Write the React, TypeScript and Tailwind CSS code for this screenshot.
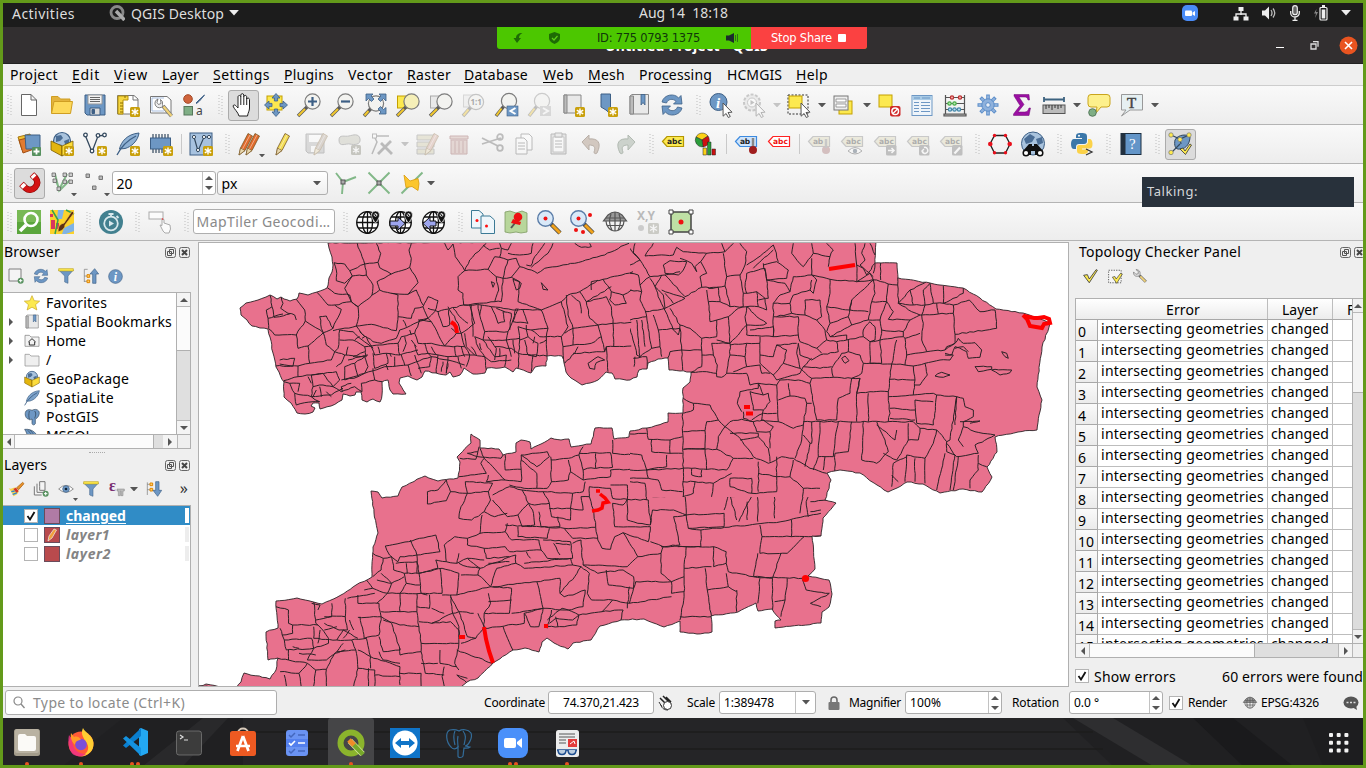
import React, { useLayoutEffect, useRef, useState } from "react";

/* Text set to a known advance width through letter spacing. */
function Fit({ w, className = "", children }: { w: number; className?: string; children: React.ReactNode }) {
  const ref = useRef<HTMLSpanElement>(null);
  const [ls, setLs] = useState(0);
  useLayoutEffect(() => {
    const el = ref.current;
    if (!el) return;
    const n = (el.textContent || "").length || 1;
    setLs((w - el.getBoundingClientRect().width) / n);
  }, [w]);
  return (
    <span className={"inline-block shrink-0 whitespace-pre " + className} style={{ width: w }}>
      <span ref={ref} className="inline-block" style={{ letterSpacing: ls }}>
        {children}
      </span>
    </span>
  );
}

const S = "#5b5b5b";
const B = "#6d97c4";
const DB = "#3d5f85";
const star = (
  <g>
    <rect x="14" y="14" width="10" height="10" rx="1.5" fill="#c9a00c" stroke="none" />
    <path d="M19 15.5v7M15.8 17.2l6.4 3.6M22.2 17.2l-6.4 3.6" stroke="#fff" strokeWidth="1.4" />
  </g>
);
const lens = (x: number, y: number, fill = "#f3f3f0") => (
  <g>
    <path d={`M${x - 5} ${y + 5}L1 23`} stroke={S} strokeWidth="3.4" />
    <path d={`M${x - 7.5} ${y + 7.5}L1.5 22.5`} stroke="#f2c82e" strokeWidth="2" />
    <circle cx={x} cy={y} r="7.6" fill={fill} stroke="#7c7c7c" strokeWidth="1.2" />
  </g>
);
const label = (fill: string, edge: string, text: string, tc: string) => (
  <g>
    <path d="M1.5 9.5L6 4.5H22.5V14.5H6Z" fill={fill} stroke={edge} strokeWidth="1.2" />
    <text x="6" y="12.3" fontSize="7.5" fontWeight="700" fill={tc} fontFamily="DejaVu Sans, sans-serif" textLength={text.length > 2 ? 15 : 10}>{text}</text>
  </g>
);
const cursor = <path d="M14 10l9 9.2-4 .3 2.3 4-2 1-2.2-4-3 2.7z" fill="#fff" stroke="#555" strokeWidth="1" />;
const pencil = (x: number, c: string) => (
  <g>
    <path d={`M${x} 23l1.5-7L${x + 9} 1.5l4.500 2.500L${x + 6} 18.5z`} fill={c} stroke="#7a5a2a" strokeWidth="0.8" />
    <path d={`M${x} 23l1.5-7 4.500 2.500z`} fill="#e9d9b0" stroke="#7a5a2a" strokeWidth="0.7" />
    <path d={`M${x + 3.5} 17L${x + 11} 3`} stroke="#ffffff" strokeOpacity=".45" strokeWidth="1" />
  </g>
);
const globe = (
  <g fill="none" stroke="#111" strokeWidth="1.3">
    <circle cx="11.5" cy="12.5" r="10.8" fill="#fff" />
    <ellipse cx="11.5" cy="12.5" rx="5" ry="10.8" />
    <path d="M11.5 1.7v21.6M.7 12.500h21.6M2.500 7h18M2.500 18h18" />
  </g>
);
const pin = <path d="M19.5 1a4 4 0 0 1 4 4c0 3-4 8-4 8s-4-5-4-8a4 4 0 0 1 4-4zM19.500 3.500a1.500 1.500 0 1 0 .01 0z" fillRule="evenodd" fill="#111" stroke="#fff" strokeWidth="0.6" />;
const globeBlue = (
  <g>
    <circle cx="12" cy="9" r="8.5" fill="#a9c3dd" stroke={DB} strokeWidth="1.2" />
    <path d="M6 4l5-1 2 3-3 3-4 1zM14 9l5-2v5l-3 3zM8 12l4 1-1 4z" fill="#4a6d95" />
  </g>
);

const ICONS: Record<string, React.ReactNode> = {
  newdoc: <path d="M4.500 1.500H14L19.500 7V22.500H4.500ZM14 1.500V7H19.500" fill="#fff" stroke="#666" />,
  open: <g stroke="#cf9e22"><path d="M1.500 20V3.500H8L10.500 6H20V20Z" fill="#e3b33d" /><path d="M1.500 20.500L4 8.500H22.500L20.500 20.500Z" fill="#fdd95a" /></g>,
  save: <g stroke={DB}><path d="M2 2H22V22H4L2 20Z" fill={B} /><path d="M5 2H19V11H5Z" fill="#f2f2f2" stroke="#999" /><path d="M7 4.500H17M7 6.500H17M7 8.500H17" stroke="#666" strokeWidth="1" /><path d="M7 15H17V22H7Z" fill="#ddd" /><path d="M9 16.500h2.500v4H9z" fill={DB} /></g>,
  layout: <g><path d="M1.500 2.500H18L22 6V21H1.500Z" fill="#fff" stroke="#777" /><path d="M2 3H12V7H7V21H2Z" fill="#f5d642" stroke="#b8930a" /><path d="M4 10h3M4 13h3M4 16h3M4 19h3M9 3v2" stroke="#8a6d00" /><path d="M17 3v4h5" fill="none" stroke="#777" />{star}</g>,
  report: <g><path d="M1.500 3.500H18L22 7V20H1.500Z" fill="#fff" stroke="#777" /><path d="M3 5h12M3 5v13h12" fill="none" stroke="#a9bfe0" /><path d="M14 13l8.500 10" stroke="#777" strokeWidth="3.800" /><path d="M14.500 13.500l8 9.500" stroke="#f0d278" strokeWidth="2.400" /><path d="M9 6a4.500 4.500 0 1 0 5 7l-.5-1.500a4.500 4.500 0 0 0-2-5l.5 4-2.500 1-1.500-2z" fill="#eee" stroke="#666" strokeWidth=".8" /></g>,
  style: <g><circle cx="6" cy="6" r="4.300" fill="#d0643c" stroke="#a34a28" /><path d="M14 10l3-3 5.500-5-5 6-3 2.500z" fill={B} stroke={DB} /><rect x="2" y="13.500" width="8.500" height="8.500" fill="#7fae85" stroke="#55775a" /><text x="14" y="22" fontSize="12" fill="#444" fontFamily="Noto Sans, sans-serif">a</text></g>,
  hand: <path d="M8 23c-1-4-5-7-6-10 .5-1.500 2-1.500 3.500.5L7 15V4c0-2 2.500-2 2.800 0V2c.3-1.800 2.700-1.800 3 0v1.500c.4-1.600 2.600-1.500 2.900.2V6c.5-1.400 2.600-1.200 2.800.4V15c0 3-1.500 4.500-2 8z M9.800 4v8M12.800 3v9M15.700 5v7" fill="#fff" stroke="#222" strokeWidth="1" />,
  pansel: <g><rect x="3" y="3" width="15" height="14" fill="#fce94f" stroke="#c4a000" /><path d="M12 .5l4 4.500h-2.400v3h-3.200v-3H8zM23.500 12l-4.500 4v-2.400h-3v-3.200h3V8zM12 23.500l-4-4.500h2.400v-3h3.200v3H16zM.5 12L5 8v2.400h3v3.200H5V16z" fill={B} stroke={DB} strokeWidth=".8" /></g>,
  zin: <g>{lens(15.500, 8.500)}<path d="M15.500 4v9M11 8.500h9" stroke={DB} strokeWidth="2.200" /></g>,
  zout: <g>{lens(15.500, 8.500)}<path d="M11 8.500h9" stroke={DB} strokeWidth="2.200" /></g>,
  zfull: <g>{lens(13, 10.500)}<path d="M3 1h7L8 3l3 3-2.500 2.500-3-3L3 8zM23 1h-7l2 2-3 3 2.500 2.500 3-3L23 8zM23 21h-7l2-2-3-3 2.500-2.500 3 3 2.500-2z" fill={B} stroke={DB} strokeWidth=".8" /></g>,
  zsel: <g><rect x="1.500" y="3" width="14" height="12" fill="#fce94f" stroke="#c4a000" />{lens(15.500, 8.500, "#f5efb8")}</g>,
  zlay: <g><rect x="1.500" y="3" width="14" height="12" fill="#e9e9e9" stroke="#aaa" />{lens(15.500, 8.500)}</g>,
  znat: <g opacity=".4"><rect x="1.500" y="2" width="14" height="12" fill="#e9e9e9" stroke="#aaa" />{lens(14, 9)}<text x="8.500" y="12" fontSize="8" fontWeight="700" fill="#333">1:1</text></g>,
  zprev: <g>{lens(14, 8)}<rect x="12" y="13" width="11" height="10" fill={B} stroke={DB} strokeWidth=".6" /><path d="M20.500 15l-5 3 5 3" fill="none" stroke="#fff" strokeWidth="2" /></g>,
  znext: <g opacity=".35">{lens(14, 8)}<rect x="12" y="13" width="11" height="10" fill="#aaa" /><path d="M15 15l5 3-5 3" fill="none" stroke="#fff" strokeWidth="2" /></g>,
  newmap: <g><path d="M3 2H20V20H3Z" fill="#e8e8e8" stroke="#888" /><path d="M3 2H6V20H3Z" fill="#bbb" stroke="#888" />{star}</g>,
  newbm: <g><path d="M7 1h9.500v20l-4.500-4-5-3z" fill={B} stroke={DB} />{star}</g>,
  bms: <g><path d="M3 3L5 1.500H21.500V21H3Z" fill="#e9e9e9" stroke="#888" /><path d="M3 3H6.500V21H3Z" fill="#bbb" stroke="#888" /><path d="M14 1.500h4V12l-2-2.500-2 2.500z" fill={B} stroke={DB} strokeWidth=".8" /></g>,
  refresh: <g fill={B} stroke={DB} strokeWidth=".8"><path d="M2 9C4 1 15 0 18.500 5L21 2.500 22 11H13.500l2.500-2.500C13 5 8 6 6.500 10z" /><path d="M22 15C20 23 9 24 5.500 19L3 21.500 2 13h8.500L8 15.500c3 3.500 8 2.500 9.500-1.500z" /></g>,
  info: <g><circle cx="9.500" cy="9" r="8.500" fill={B} stroke={DB} /><text x="7" y="14.500" fontSize="15" fontStyle="italic" fontWeight="700" fill="#fff" fontFamily="Liberation Serif, serif">i</text>{cursor}</g>,
  act: <g opacity=".4"><circle cx="10" cy="9.500" r="8" fill="#ddd" stroke="#888" strokeWidth="2" strokeDasharray="3 1.500" /><circle cx="10" cy="9.500" r="4.500" fill="#fff" stroke="#888" /><path d="M8.500 7l4 2.500-4 2.500z" fill="#777" />{cursor}</g>,
  select: <g><rect x="1" y="2" width="20" height="19" fill="none" stroke="#333" strokeDasharray="2 1.500" /><rect x="2" y="3" width="13" height="12" fill="#fce94f" stroke="#c4a000" />{cursor}</g>,
  selval: <g><rect x="7" y="8" width="13" height="13" fill="#fce94f" stroke="#c4a000" /><rect x="2" y="3" width="14" height="14" fill="#eee" stroke="#777" /><path d="M4 6h10v3H4zM4 11h10v3H4z" fill="#fff" stroke="#888" strokeWidth=".8" /></g>,
  desel: <g><rect x="2" y="2" width="13" height="12" fill="#fce94f" stroke="#c4a000" /><rect x="13" y="13" width="10.500" height="10.500" rx="2" fill="#cf2a2a" /><circle cx="18.200" cy="18.200" r="3.300" fill="none" stroke="#fff" strokeWidth="1.500" /><path d="M16 20.500l4.500-4.500" stroke="#fff" strokeWidth="1.500" /></g>,
  table: <g><rect x="2" y="2.500" width="20" height="20" fill="#eef4fa" stroke={B} /><path d="M2.500 3H22V7H2.500z" fill="#a9cbe6" /><path d="M4 5h6M12 5h8M4 9.500h5M11 9.500h9M4 12.500h5M11 12.500h9M4 15.500h5M11 15.500h9M4 18.500h5M11 18.500h9" stroke={B} strokeWidth="1.200" /></g>,
  abacus: <g fill="none" stroke="#555" strokeWidth="1.200"><path d="M2.500 2v19M21.500 2v19M2.500 4.500h19M2.500 10.500h19M2.500 16.500h19" /><path d="M1 21h22v2H1z" fill="#aaa" /><circle cx="9" cy="4.500" r="1.700" fill="#f3a6a6" stroke="#b33" /><circle cx="17" cy="4.500" r="1.700" fill="#f3a6a6" stroke="#b33" /><circle cx="6.500" cy="10.500" r="1.700" fill="#b6eab0" stroke="#4a4" /><circle cx="11.500" cy="10.500" r="1.700" fill="#b6eab0" stroke="#4a4" /><circle cx="7" cy="16.500" r="1.700" fill="#b5d9ee" stroke="#48a" /><circle cx="11.500" cy="16.500" r="1.700" fill="#b5d9ee" stroke="#48a" /><circle cx="16" cy="16.500" r="1.700" fill="#b5d9ee" stroke="#48a" /></g>,
  gear: <g stroke="#5b8dc9"><path d="M12 1.500v21M1.500 12h21M4.600 4.600l14.800 14.800M19.400 4.600L4.600 19.400" strokeWidth="3.600" /><path d="M12 2.500v19M2.500 12h19M5.300 5.300l13.400 13.400M18.700 5.300L5.300 18.700" stroke="#8eb1dc" strokeWidth="2" /><circle cx="12" cy="12" r="6.200" fill="#8eb1dc" /><circle cx="12" cy="12" r="2.300" fill="#e9eff7" /></g>,
  sigma: <path d="M5 1.500H20L20.500 7H19C18.500 4.500 17 4 15 4H10L15 11.500 9 19h6.500c2.500 0 3.500-1 4.500-4h1.500L20 22.500H4.500V21L11 12.500 5 3z" fill="#9b0fa3" stroke="#6d0873" strokeWidth=".5" />,
  ruler: <g><path d="M2 6.500h20M2 4v5M22 4v5" stroke="#3d6380" strokeWidth="1.800" /><rect x="1" y="12" width="22" height="8.500" fill="#bbb" stroke="#555" /><path d="M4 12v4M7 12v3M10 12v5M13 12v3M16 12v4M19 12v3" stroke="#333" /></g>,
  maptip: <g><path d="M4 1.500H20a3 3 0 0 1 3 3V11a3 3 0 0 1-3 3H14L9 20 10 14H4a3 3 0 0 1-3-3V4.500a3 3 0 0 1 3-3z" fill="#fdf08c" stroke="#c9a41c" /><circle cx="5.500" cy="19.500" r="3.800" fill="#7fae85" stroke="#557a5c" /></g>,
  textann: <g><path d="M1.500 1.500H22.500V17H10L1.500 23 6 17H1.500Z" fill="#e6f0f2" stroke="#999" /><text x="7" y="14.500" fontSize="15" fontFamily="Liberation Serif, serif" fill="#444" stroke="#444" strokeWidth=".5">T</text></g>,

  addlayer: <g><path d="M1 5l12-3 3 12-11 4z" fill="#f1c232" stroke="#a8770f" /><path d="M2 8l12-3 3 12-11 4z" fill="#e07b32" stroke="#a14e14" /><path d="M8 3h15v14H9z" fill={B} stroke={DB} /><rect x="15" y="15" width="9" height="9" rx="1" fill="#57915f" /><path d="M19.500 16.500v6M16.500 19.500h6" stroke="#fff" strokeWidth="1.800" /></g>,
  gpkg: <g>{globeBlue}<path d="M1 9l11 5v10L1 18z" fill="#e3b50e" stroke="#7a5c00" strokeWidth=".8" /><path d="M23 9l-11 5v10l11-6z" fill="#fcdc3c" stroke="#7a5c00" strokeWidth=".8" />{star}</g>,
  newgpkg: <g>{globeBlue}<path d="M1 9l11 5v10L1 18z" fill="#e3b50e" stroke="#7a5c00" strokeWidth=".8" /><path d="M23 9l-11 5v10l11-6z" fill="#fcdc3c" stroke="#7a5c00" strokeWidth=".8" /></g>,
  shp: <g fill="none" stroke="#34495e" strokeWidth="1.300"><path d="M2.500 4L9 20 15 4 22 3" /><g fill="#fff"><circle cx="2.500" cy="3" r="1.800" /><circle cx="9" cy="19" r="1.800" /><circle cx="15" cy="3.500" r="1.800" /><circle cx="21.500" cy="3" r="1.800" /></g>{star}</g>,
  feather: <g><path d="M3.500 17C5 10 11 2 23 1c-1 8-8 14-14 15.500z" fill="#7da3cb" stroke={DB} strokeWidth="1" /><path d="M1 23C5 15 12 8 20 4" fill="none" stroke={DB} strokeWidth="1.300" /></g>,
  feathern: <g><path d="M3.500 17C5 10 11 2 23 1c-1 8-8 14-14 15.500z" fill="#8fb1d4" stroke={DB} strokeWidth="1" /><path d="M1 23C5 15 12 8 20 4" fill="none" stroke={DB} strokeWidth="1.300" />{star}</g>,
  chip: <g><path d="M4 2v19M7 2v19M10 2v19M13 2v19M16 2v19M19 2v19" stroke="#34495e" strokeWidth="1.200" /><rect x="1.500" y="6" width="20" height="11" fill={B} stroke={DB} />{star}</g>,
  virt: <g><rect x="1" y="1" width="22" height="22" fill="#a7c2df" stroke={DB} /><path d="M5 5l4 14 6-14 5 0" fill="none" stroke="#34495e" strokeWidth="1.200" /><g fill="#fff" stroke="#34495e"><circle cx="5" cy="5" r="1.600" /><circle cx="9" cy="18" r="1.600" /><circle cx="15" cy="5" r="1.600" /><circle cx="20" cy="5" r="1.600" /></g>{star}</g>,
  edits: <g>{pencil(1, "#e06a2c")}{pencil(8, "#e06a2c")}</g>,
  edit: pencil(5, "#f3dc55"),
  saved: <g opacity=".35"><path d="M2 2H20V21H4L2 19Z" fill="#aaa" stroke="#666" /><path d="M5 3H17V10H5ZM7 14H15V20H7Z" fill="#fff" />{pencil(10, "#a98")}</g>,
  addpoly: <g opacity=".35"><path d="M2 8C2 2 8 5 12 4s10-3 11 3-6 6-10 5-11 4-11-4z" fill="#bba" stroke="#666" /><rect x="14" y="13" width="10" height="10" rx="1.500" fill="#776" /><path d="M19 14.500v7M16 16.500l6 3.500M22 16.500l-6 3.500" stroke="#fff" strokeWidth="1.300" /></g>,
  vertex: <g opacity=".35"><path d="M4 4h15M4 4l3 6-5 12" fill="none" stroke="#555" strokeWidth="1.500" /><rect x="2.500" y="2" width="4" height="4" fill="#fff" stroke="#555" /><path d="M8 22L21 9M11 11l11 11" stroke="#555" strokeWidth="2.800" /></g>,
  attr: <g opacity=".35"><path d="M2 3H19V8H2ZM2 10H19V15H2ZM2 17H19V22H2Z" fill="#cdc7a0" stroke="#777" />{pencil(10, "#c98")}</g>,
  trash: <g opacity=".35"><path d="M2 4h18v3H2zM3 8h16v14H3z" fill="#c9a39a" stroke="#844" /><path d="M7 9v12M11 9v12M15 9v12" stroke="#844" /></g>,
  cut: <g opacity=".35" fill="none" stroke="#555" strokeWidth="1.800"><path d="M1 6l16 8M1 12L20 6" /><circle cx="19" cy="5" r="2.800" /><circle cx="19" cy="16" r="2.800" /></g>,
  copy: <g opacity=".4" fill="#fff" stroke="#666"><path d="M7 2H15L18 5V18H7Z" /><path d="M2 6H10L13 9V22H2Z" /><path d="M4 11h7M4 14h7M4 17h7" /></g>,
  paste: <g opacity=".4"><path d="M4 2H19V22H4Z" fill="#ccc" stroke="#666" /><path d="M6 5H17V20H6Z" fill="#fff" stroke="#888" /><path d="M8 1h7v4H8zM8 9h7M8 12h7M8 15h7" fill="#ddd" stroke="#666" /></g>,
  undo: <path d="M9 3v4c9-1 13 4 8 14-1 1-3 1-3-1 2-5 0-7-5-7v5L2 10z" fill="#d2c8c0" stroke="#b9b0a8" />,
  redo: <path d="M15 3v4c-9-1-13 4-8 14 1 1 3 1 3-1-2-5 0-7 5-7v5l7-8z" fill="#ccd2cc" stroke="#b2bab2" />,
  abcY: label("#fce94f", "#b49600", "abc", "#222"),
  chart: <g stroke="#222" strokeWidth=".5"><path d="M8 8L2 5A7 7 0 0 1 14 4z" fill="#fcd116" /><path d="M8 8l6-4a7 7 0 0 1-5 11z" fill="#c11" /><path d="M8 8l1 7a7 7 0 0 1-7-10z" fill="#2a9d3a" /><path d="M9 16h3.500v7H9z" fill="#fcd116" /><path d="M13.500 10H17v13h-3.500z" fill="#2a9d3a" /><path d="M18 17h3.500v6H18z" fill="#c11" /></g>,
  abB: <g>{label("#cfe4fb", "#3c8adf", "ab", "#222")}<path d="M19 6v11" stroke="#888" strokeWidth="2.500" /><circle cx="19" cy="18" r="4" fill="#a01e1e" /></g>,
  abcR: label("#fff", "#f22", "abc", "#e11"),
  abP: <g opacity=".4">{label("#ddd9b8", "#888", "ab", "#444")}<circle cx="19" cy="18" r="4" fill="#a77" /><path d="M19 7v9" stroke="#888" strokeWidth="2.500" /></g>,
  abE: <g opacity=".4">{label("#ddd9b8", "#888", "abc", "#444")}<path d="M8 19q7-7 14 0q-7 6-14 0z" fill="#fff" stroke="#555" /><circle cx="15" cy="19" r="2.200" fill="#456" /></g>,
  abM: <g opacity=".4">{label("#ddd9b8", "#888", "abc", "#444")}<rect x="13" y="13" width="10.500" height="10.500" rx="1.500" fill="#777" /><path d="M15 18.500h6M18.500 16l2.500 2.500-2.500 2.500" stroke="#fff" strokeWidth="1.500" fill="none" /></g>,
  abR: <g opacity=".4">{label("#ddd9b8", "#888", "abc", "#444")}<rect x="13" y="13" width="10.500" height="10.500" rx="1.500" fill="#777" /><path d="M16 19.500a3 3 0 1 0 2-4M18 21l-2-2 2-2" stroke="#fff" strokeWidth="1.400" fill="none" /></g>,
  abC: <g opacity=".4">{label("#ddd9b8", "#888", "abc", "#444")}<rect x="13" y="13" width="10.500" height="10.500" rx="1.500" fill="#777" /><path d="M15.500 21.500l5.500-6" stroke="#fff" strokeWidth="2.200" /></g>,
  hex: <g><path d="M6.500 3.500H17.500L22 12 17.500 21H6.500L2 12Z" fill="none" stroke="#222" strokeWidth="1.300" /><g fill="#e8101c"><circle cx="2.300" cy="12" r="2.300" /><circle cx="21.700" cy="12" r="2.300" /><circle cx="6.500" cy="3.500" r="1.700" /><circle cx="17.500" cy="3.500" r="1.700" /><circle cx="6.500" cy="20.800" r="1.700" /><circle cx="17.500" cy="20.800" r="1.700" /></g></g>,
  binoc: <g><circle cx="12" cy="11.500" r="11.500" fill="#a9c3dd" stroke={DB} /><path d="M3 7l6-5 5 3-3 5-6 2zM15 7l6-2 1 6-5 2z" fill="#4a6d95" /><path d="M8 12h3v2h2v-2h3l6 7v4h-8v-4h-4v4H2v-4z" fill="#111" /><circle cx="5" cy="21" r="2.800" fill="#fff" stroke="#111" strokeWidth="1.500" /><circle cx="19" cy="21" r="2.800" fill="#fff" stroke="#111" strokeWidth="1.500" /></g>,
  python: <g><path d="M11 1c5 0 6 1 6 3.500V9c0 2-1 3-3 3H9c-2 0-3 1-3 3v2H4c-2 0-3-2-3-5s1-5 3-5h8V6H6V4.500C6 2 7 1 11 1z" fill="#3b77a9" /><path d="M13 22c-5 0-6-1-6-3.500V15c0-1.500 1-2 3-2h4c2.500 0 4-1.500 4-3.500V7h1.500c2 0 3 2 3 5s-1 4.500-3 4.500H12v1h6v1c0 2.500-1 3.500-5 3.500z" fill="#fbd249" /><circle cx="9" cy="3.800" r="1" fill="#fff" /><path d="M16 17l6 3-6 3" fill="none" stroke="#333" strokeWidth="1.300" /></g>,
  help: <g><rect x="2" y="1.500" width="20" height="21" fill="#6395c8" stroke="#1c2e40" /><rect x="2" y="1.500" width="4.500" height="21" fill="#22303f" /><text x="10" y="17" fontSize="15" fontFamily="Liberation Serif, serif" fill="#fff">?</text></g>,
  topo: <g><path d="M7 8C10 2 20 2 22 5c0 5-3 12-10 12-5 1-6-4-5-9z" fill={B} stroke="#34495e" /><path d="M3 3L12 7 21 3M12 7L13 12M3 21L12 12" fill="none" stroke="#34495e" strokeWidth="1.200" /><g fill="#fce94f" stroke="#777" strokeWidth=".7"><circle cx="3" cy="3" r="2.200" /><circle cx="12" cy="7.500" r="2.200" /><circle cx="21" cy="3" r="2.200" /><circle cx="3" cy="20.500" r="2.200" /></g><path d="M12 17l3-1 2 3 5-7 1.500 1-6 9.500z" fill="#fce94f" stroke="#333" strokeWidth=".8" /></g>,

  magnet: <g fill="none"><path d="M4.500 13l4 4c3 2.500 6.500 2.500 9.500-.5s3-6.500.5-9.500L15 3.500" stroke="#8a0808" strokeWidth="6.400" /><path d="M4.500 13l4 4c3 2.500 6.500 2.500 9.500-.5s3-6.500.5-9.500L15 3.500" stroke="#d31313" strokeWidth="5" /><path d="M5 13.500l2.500 2.500M15.500 4l2 2.200" stroke="#fff" strokeWidth="5" /></g>,
  snapv: <g fill="none" stroke="#82b888" strokeWidth="2"><path d="M5 3L9 19 17 3M5 8L10 19 20 9" /><g fill="#ccc" stroke="#666" strokeWidth=".8"><path d="M2 2h3.500v3.500H2zM3 8h3.500v3.500H3zM7 16h3.500v3.500H7zM13 2h3.500v3.500H13zM19 2h3.500v3.500H19zM13 9h3.500v3.500H13zM19 9h3.500v3.500H19z" /></g></g>,
  snapp: <g fill="#bbb" stroke="#777"><path d="M3 3h3.500v3.500H3zM16 5h3.500v3.500H16zM9.500 15h3.500v3.500H9.500z" /></g>,
  topoedit: <g stroke="#82b888" strokeWidth="1.900"><path d="M2 2l7 9 13-5M9 11l-1 12" fill="none" /><rect x="7" y="9" width="4" height="4" fill="#aaa" stroke="#555" strokeWidth="1" /></g>,
  inter: <g stroke="#82b888" strokeWidth="1.900"><path d="M1.500 1.500l21 21M22.500 1.500l-21 21" /><rect x="10" y="10" width="4" height="4" fill="#aaa" stroke="#555" strokeWidth="1" /></g>,
  trace: <g><path d="M22.500 1.500l-21 21" stroke="#82b888" strokeWidth="1.900" /><path d="M4 4l6 6 8-2.500 1 5-1 7-6-4-6 1z" fill="#fcc62d" stroke="#d99b0a" strokeWidth=".8" /></g>,

  maptiler: <g><rect width="24" height="24" fill="#5aa53c" /><rect width="24" height="12" fill="#8cc665" opacity=".6" /><path d="M3 21l6-6" stroke="#fff" strokeWidth="3.500" /><circle cx="14" cy="9.500" r="6.500" fill="none" stroke="#fff" strokeWidth="2.600" /></g>,
  osm: <g><rect width="24" height="24" fill="#fcd22a" /><path d="M0 4h3v3H0zM1 10h4v9H1zM6 13h3v6H6z" fill="#d8365e" /><path d="M8 0h6l-2 9H7zM14 18l10-5v8l-8 3h-4z" fill="#7fb3e6" /><path d="M2 0l6 10-3 14M16 0l8 4" fill="none" stroke="#36a24a" strokeWidth="1.500" /><path d="M8 22c0-7 3-8 6-9l8-12 2 2-9 12c0 4-4 6-7 7z" fill="#5e3014" stroke="#f4c842" strokeWidth=".8" /></g>,
  clock: <g><circle cx="12" cy="12" r="12" fill="#42808f" /><circle cx="12" cy="13.500" r="6.800" fill="none" stroke="#d8e8ec" strokeWidth="1.800" /><path d="M9.500 4h5M12 4v3M17.500 6l2 2" stroke="#d8e8ec" strokeWidth="1.800" /><path d="M10 10.500l5 3-5 3z" fill="#d8e8ec" /></g>,
  rectsel: <g fill="#fbfbfb" stroke="#aaa"><rect x="1" y="2" width="14" height="7" /><path d="M14 9.500v6l-2-.5 3 6 2 2h4l1.500-4-.5-4-6-2V9.500z" /><circle cx="14.500" cy="9" r=".8" fill="#e33" stroke="none" /></g>,
  globe: <g>{globe}{pin}</g>,
  globeR: <g>{globe}<path d="M1 11h8V7l7 6.500L9 20v-4H1z" fill="#9da5ee" stroke="#111" />{pin}</g>,
  globeL: <g>{globe}<path d="M14 11H8V7L1 13.500 8 20v-4h6z" fill="#9da5ee" stroke="#111" />{pin}</g>,
  docs: <g fill="#eef6fb" stroke="#3b7a96"><path d="M.5 .5H8L12 4V18H.5Z" /><path d="M10 6H19L23.500 10V23.500H10Z" /><circle cx="6" cy="10.500" r="1.500" fill="#f11" stroke="none" /><circle cx="15.500" cy="16" r="1.500" fill="#f11" stroke="none" /></g>,
  pinmap: <g><path d="M1 2l5-1 6 2 6-2 5 2v19l-6 1-5-1-6 1-5-1z" fill="#b8d69b" stroke="#7d9a62" strokeWidth=".8" /><path d="M7 18l4-5" stroke="#555" strokeWidth="2" /><circle cx="14" cy="7" r="4.300" fill="#ee1111" /><path d="M9 9l8 3-1 3-9-2z" fill="#ee1111" /></g>,
  zpoint: <g><path d="M14 14l9 9" stroke="#444" strokeWidth="4.500" /><path d="M15 15l8 8" stroke="#f0a21c" strokeWidth="3" /><circle cx="8.500" cy="8.500" r="7.800" fill="#d9e9f8" stroke="#5b7da8" strokeWidth="1.400" /><circle cx="8.500" cy="8.500" r="2" fill="#e11" /></g>,
  zpoints: <g><path d="M14 14l9 9" stroke="#444" strokeWidth="4.500" /><path d="M15 15l8 8" stroke="#f0a21c" strokeWidth="3" /><circle cx="8.500" cy="8.500" r="7.800" fill="#d9e9f8" stroke="#5b7da8" strokeWidth="1.400" /><g fill="#e11"><circle cx="8.500" cy="8.500" r="2" /><circle cx="20" cy="5" r="2" /><circle cx="6" cy="20" r="2" /><circle cx="13" cy="22" r="2" /></g></g>,
  globeG: <g fill="none" stroke="#555" strokeWidth="1.200"><path d="M5 5q7-6 14 0l4.500 6H.5z" fill="#999" /><path d="M3 11c0 5 4 10 9 10s9-5 9-10M8 4c-2 5-2 11 1 16M12 2v19M16 4c2 5 2 11-1 16M4 15.500h16M3 8h18" /></g>,
  xy: <g opacity=".3"><text x="1" y="10" fontSize="12" fontWeight="700" fill="#333" fontFamily="Noto Sans, sans-serif" textLength="18">X,Y</text><circle cx="5" cy="18" r="3" fill="#777" /><rect x="12" y="13" width="11" height="11" rx="1.500" fill="#776" /><path d="M17.500 14.500v8M14 16.500l7 4M21 16.500l-7 4" stroke="#fff" strokeWidth="1.400" /></g>,
  extent: <g><rect x="2" y="2" width="20" height="20" fill="#bfe0a5" stroke="#444" strokeWidth="1.500" /><circle cx="12" cy="12" r="2.500" fill="#e11" /><g fill="#fff" stroke="#444" strokeWidth="1"><path d="M0 0h4v4H0zM20 0h4v4h-4zM0 20h4v4H0zM20 20h4v4h-4z" /></g></g>,

  addsq: <g><path d="M1.500 1.500h18v18h-18z" fill="#f4f4f4" stroke="#777" strokeWidth="1.400" /><circle cx="19" cy="19" r="4.500" fill="#57915f" /><path d="M19 16.500v5M16.500 19h5" stroke="#fff" strokeWidth="1.500" /></g>,
  filter: <g><path d="M1 3h22l-8 9v11l-5-2V12z" fill={B} stroke={DB} strokeWidth=".8" /><path d="M1 1h22v3.500H1z" fill="#fce94f" stroke="#b49600" strokeWidth=".8" /></g>,
  collapse: <g><path d="M2 2v19M2 2h5M2 12h5M2 20h5" stroke="#777" /><path d="M6 10h4v4H6zM6 18h4v4H6z" fill="#ffcc66" stroke="#e08700" strokeWidth="1.500" /><path d="M14.500 23V9h-4l7-8 6 8h-4v14z" fill={B} stroke={DB} /></g>,
  expand: <g><path d="M2 2v19M2 5h5M2 13h5" stroke="#777" /><path d="M6 3h4v4H6zM6 11h4v4H6z" fill="#ffcc66" stroke="#e08700" strokeWidth="1.500" /><path d="M14.500 1v13h-4l7 9 6-9h-4V1z" fill={B} stroke={DB} /></g>,
  infoonly: <g><circle cx="12" cy="12" r="11" fill={B} stroke={DB} /><text x="9" y="18.500" fontSize="19" fontStyle="italic" fontWeight="700" fill="#fff" fontFamily="Liberation Serif, serif">i</text></g>,
  star: <path d="M12 1l3.300 7.500 8.200.7-6.200 5.300 2 8L12 18.200 4.700 22.500l2-8L.5 9.200l8.200-.7z" fill="#fce94f" stroke="#c9a41c" />,
  home: <g><path d="M1.500 20V3.500H8L10.500 6H22.500V20Z" fill="#f3f3f3" stroke="#777" /><path d="M6.500 13.500L12 8.500l5.500 5M8 13v5h8v-5" fill="none" stroke="#333" strokeWidth="1.500" /></g>,
  folder: <path d="M1.500 21V3.500H8L10.500 6H22.500V21Z" fill="#efefef" stroke="#888" />,
  elephant: <g><path d="M3 3c3-3 7-2 9-1 3-2 8-2 10 1 3 4-2 12-4 11l-1 2v6c-2 3-5 2-5-1v-6c-3 2-5 1-5 0-4 0-7-7-4-12z" fill={B} stroke="#34495e" /><path d="M8 3c-1 5-1 8 0 12M16 3c3 4 1 8 0 11" fill="none" stroke="#34495e" strokeWidth="1.200" /></g>,
  mssql: <path d="M1 2c12-1 20 6 22 20-8-3-14-2-20 0 3-6 3-12-2-20zM5 3c6 5 9 10 10 17M9 3c5 5 8 10 10 17" fill={B} stroke="#34495e" />,
  brush: <g><path d="M13 10l9-8 2 2-8 9z" fill="#e8912a" stroke="#a35a0a" /><path d="M1 11c5 2 7-2 11-1l4 5c0 4-5 7-8 8-1-4-4-8-7-12z" fill="#f7d354" /><path d="M12 10l4 5-3 3-5-6z" fill="#d2322b" /><path d="M5 16l5-1M7 20l6-2" stroke="#38c" strokeWidth="2" /></g>,
  group: <g fill="none" stroke="#777" strokeWidth="1.500"><path d="M2 8v13h11M6 4v13h11M10 8V1h8v13H10z" fill="#f4f4f4" /><circle cx="19" cy="19" r="4.500" fill="#57915f" stroke="none" /><path d="M19 16.500v5M16.500 19h5" stroke="#fff" /></g>,
  eye: <g><path d="M1 12q11-11 22 0q-11 10-22 0z" fill="#fff" stroke="#777" strokeWidth="1.200" /><circle cx="12" cy="12" r="5" fill={B} stroke={DB} /><circle cx="12" cy="12" r="2" fill="#123" /></g>,
  eps: <g><text x="0" y="15" fontSize="24" fill="#7a2e72" fontWeight="700" fontFamily="Liberation Serif, serif">ε</text><path d="M12 12h11v3h-2v7h-3v-7h-1v7h-3v-7h-2z" fill="#bbb" stroke="#888" strokeWidth=".8" /></g>,
  check: <path d="M1 10l6-1 3 7L21 1l2 1-13 20z" fill="#fce94f" stroke="#333" strokeWidth="1.300" />,
  checkbox: <g><rect x="1" y="2" width="20" height="20" fill="#f6f6f6" stroke="#555" strokeWidth="1.500" strokeDasharray="2 2" /><path d="M7 13l4-1 2 4 7-9 3 1-9 15z" fill="#fce94f" stroke="#333" strokeWidth="1" /></g>,
  wrench: <g><path d="M11 11l11 11" stroke="#666" strokeWidth="5" /><path d="M12.500 12.500l9 9" stroke="#f0d278" strokeWidth="3.200" /><path d="M5 1l4 3 0 4-4 1-4-4c-1 6 4 9 9 7 4-3 3-11-5-11z" fill="#ddd" stroke="#666" /></g>,
};

function Ic({ n, s = 24 }: { n: string; s?: number }) {
  return (
    <svg width={s} height={s} viewBox="0 0 24 24" className="shrink-0 overflow-visible">
      {ICONS[n]}
    </svg>
  );
}

const Grip = ({ className = "w-4" }: { className?: string }) => (
  <span className={"flex shrink-0 justify-center pl-1 " + className}>
    <svg width="5" height="20">
      <path d="M1 0V20M4 1V20" stroke="#bdbdbd" strokeWidth="1" strokeDasharray="1 2" />
    </svg>
  </span>
);
const Tri = ({ c = "#555", w = 8 }: { c?: string; w?: number }) => (
  <svg width={w} height={w / 2 + 0.5} viewBox="0 0 8 4.500" className="shrink-0">
    <path d="M0 0H8L4 4.500Z" fill={c} />
  </svg>
);

/* Toolbar notation: "|" grip, ":" narrow grip, "/" separator, "v" menu arrow, "*" prefix = pressed, "." suffix = has menu */
function Tools({ items }: { items: string[] }) {
  return (
    <>
      {items.map((it, i) => {
        if (it === "|") return <Grip key={i} />;
        if (it === ":") return <Grip key={i} className="w-[15px]" />;
        if (it === "/") return <span key={i} className="flex w-[7px] shrink-0 justify-center"><span className="h-5 w-px bg-[#c9c9c9]" /></span>;
        if (it === "v" || it === "V") return <span key={i} className="flex w-3 shrink-0 justify-center"><Tri c={it === "V" ? "#c4c4c4" : "#555"} /></span>;
        const on = it[0] === "*";
        const menu = it.endsWith(".");
        const name = it.replace(/[*.]/g, "");
        return (
          <span key={i} className="relative flex w-[33px] shrink-0 items-center justify-center">
            <span className={on ? "flex h-[31px] w-[31px] items-center justify-center rounded-[3px] border border-[#ababab] bg-[#dcdcdc]" : "flex"}>
              <Ic n={name} />
            </span>
            {menu && <span className="absolute right-0.5 -bottom-px flex"><Tri w={6} /></span>}
          </span>
        );
      })}
    </>
  );
}

const bar = "flex shrink-0 items-center border-b border-[#b4b4b4] bg-linear-to-b from-[#f9f9f9] to-[#ededed] ";

const MENUS: [string, number, number, number][] = [
  ["Project", 3, 48, 14], ["Edit", 0, 28, 14], ["View", 0, 34, 14], ["Layer", 0, 37, 14], ["Settings", 0, 57, 14],
  ["Plugins", 0, 50, 14], ["Vector", 4, 45, 14], ["Raster", 0, 44, 13], ["Database", 0, 64, 15], ["Web", 0, 31, 14],
  ["Mesh", 0, 37, 14], ["Processing", 3, 73, 15], ["HCMGIS", -1, 55, 14], ["Help", 0, 32, 0],
];

/* ---------- map ---------- */
const OUTLINE =
  "M328 243L329 248L332 257L333 265L332 272L329 278L327 288L317 292L308 295L299 293L297 299L290 301L284 299L281 297L277 299L270 295L266 297L258 300L246 303L240 308L241 315L247 320L252 326L260 328L268 329L270 337L273 353L276 367L279 372L284 382L284 397L291 403L297 413L305 414L313 412L315 408L311 406L313 403L319 403L320 409L331 406L342 400L343 394L350 396L355 395L356 392L361 392L362 400L367 402L373 399L380 402L382 395L382 382L388 380L390 390L393 394L406 394L399 383L400 378L408 376L417 380L422 377L425 371L436 373L446 375L450 372L453 377L460 375L464 368L473 374L485 373L487 368L500 368L505 367L513 372L516 368L531 373L535 367L546 366L547 356L562 356L564 363L566 372L571 378L576 381L582 385L590 383L598 380L606 372L612 373L615 379L630 380L637 377L639 370L647 369L648 363L658 359L668 358L669 370L680 371L691 372L690 382L683 388L683 413L668 413L668 422L647 428L630 431L629 437L614 439L612 428L595 428L591 444L571 447L569 439L561 440L551 438L541 444L531 449L530 442L521 440L516 443L516 452L503 455L499 449L480 448L480 440L471 434L471 443L460 454L457 457L460 462L458 478L438 481L425 476L402 487L398 496L382 498L378 492L371 491L374 513L378 533L373 547L372 577L356 585L341 595L322 604L297 598L276 601L278 628L266 632L268 660L278 658L276 670L270 679L244 673L241 682L234 690L457 690L467 682L478 678L493 663L513 650L525 648L539 652L542 642L547 638L554 643L568 649L573 643L591 640L600 626L621 620L644 619L664 627L680 621L680 632L697 634L712 632L711 616L738 612L756 603L758 611L772 609L781 620L775 621L775 628L821 623L822 612L829 607L832 594L829 580L808 576L815 569L812 536L821 536L823 518L836 503L825 500L831 480L827 473L840 470L860 473L877 485L888 492L897 488L907 482L923 484L940 493L963 489L982 492L992 477L987 467L997 452L995 437L1018 432L1037 430L1042 400L1037 387L1042 347L1050 323L1023 313L996 309L980 298L963 288L930 283L898 278L897 263L881 263L875 263L876 240Z M199 686L206 684L222 687Z";

const NW =
  "M478 10L492 50L500 72L540 67L548 40L535 10M408 68L440 72L455 92L500 72L505 105L463 108L440 130L415 122L415 90L408 68M455 92L463 108M540 67L545 83L580 102L635 82L640 55L633 30L640 10M580 102L537 125L545 150L580 160L630 163L660 128L650 105L635 82M505 105L525 135L522 165L480 200L460 185L440 145L463 108M388 143L410 160L455 165L460 185L410 195L430 208L405 265L385 228L365 230L370 265L376 278L405 265M357 157L390 195L410 195M295 178L320 210L322 243L376 278L330 318L300 325L295 285L322 243M216 165L222 200L205 210L210 235L212 266M250 170L255 190L248 205L270 220L290 225L295 240M275 222L245 230L228 232L222 200M210 235L255 222M212 266L230 285L295 285M460 185L480 200L482 230L475 258L520 253L595 272L600 230L600 165L580 160M522 165L545 150M475 258L405 272M600 230L640 235L650 205L675 200L690 170L720 182L710 215L690 235L675 200M630 163L655 150L675 195M690 235L605 270L595 295L550 310L525 305L490 280L475 258M376 278L385 315L410 335L420 325L425 270L465 275L480 290L520 320L530 345M330 318L335 370L300 378L232 378M335 370L400 360L410 335L440 345L430 370L415 380M300 378L300 410L257 422M245 360L290 355L285 378L245 372M300 410L340 405L415 395L425 420L405 440L375 400L340 405L345 440L340 470L290 460L275 430L258 425M345 440L375 435L405 440L430 455M290 460L295 495L320 488L365 485L340 470L400 465L435 445M430 420L500 400L560 380L630 375L700 350M425 300L465 300L500 320L505 350L440 345M500 320L545 315L600 310L605 345L660 330M440 380L470 370L480 410L440 420L440 380M480 410L500 400M470 370L500 350M530 345L565 340L570 370L530 385L525 340M565 340L605 345M600 310L610 290L650 280L665 240L690 235M525 385L530 420L490 430L492 455M553 425L530 420M460 430L430 440L433 455M430 455L470 440L492 455M650 280L660 310L700 310L740 318L700 245L690 235M660 240L700 245M740 318L800 320L815 345L750 350L690 340L660 345L650 315M690 340L700 350L695 380L660 385M650 345L670 400M630 375L640 408M700 350L750 360L800 375M740 10L750 30L765 12L772 50L800 92L815 60L850 25L865 10M800 92L780 110L780 150L795 160L797 195M800 92L870 88L890 50L905 52L910 25L905 10M870 88L895 110L902 150L890 185L797 195M895 110L915 115L910 185L890 185M915 115L930 60L905 52M930 60L955 55L965 80L940 112L915 115M930 40L965 45L1000 40L1005 10M910 25L930 30L940 10M965 80L1000 90L1018 100L1040 85L1130 70L1220 45L1280 15L1293 10M1000 82L1050 40L1065 10M985 75L998 78L1010 50L1040 10M940 112L965 125L960 185L1030 210L1090 185L1110 165L1145 155L1200 120M1130 10L1150 22L1180 20L1175 10M945 118L970 130L965 145L955 150L945 118M880 125L885 142L890 130L880 125M1030 128L1050 150L1035 148L1030 128M1180 125L1215 118L1240 155M1240 140L1165 185L1145 155M1180 125L1180 150M1215 118L1305 95M1240 155L1275 165L1285 190L1250 195L1235 180L1240 155M1165 185L1175 235L1200 255L1125 265L1110 225L1105 165M1200 255L1245 250L1240 200L1225 170M1245 250L1300 247M1275 165L1300 150M1165 185L1225 170M1125 265L1125 315L1095 320L1090 290L1110 260L1090 185M1125 315L1180 310L1210 290L1200 255M1125 265L1100 280M1095 320L1098 370M1125 340L1220 335L1225 320L1300 318M1225 320L1230 395M1220 335L1210 290M1245 250L1247 320M1100 370L1130 340L1140 320M1170 370L1200 350L1220 360L1195 368L1190 388L1175 385L1170 370M1030 210L1050 265L1045 290L1047 348M1050 265L1000 270L960 260M1045 290L1090 290M797 195L850 195L880 200L945 210L1030 210M850 195L845 225L860 275L930 275L945 240L955 205M820 195L825 290M750 200L780 250L790 280L830 250L815 195M740 318L775 280L790 280L800 320M720 215L735 260L755 255L752 210M690 205L720 215L797 195M765 205L785 230L810 250M880 200L900 250L920 245L915 215L940 220L935 270M895 205L920 215M960 205L945 245L990 250L975 210M860 275L855 300L890 350M830 290L855 300M930 275L925 300L940 350M960 260L965 300L960 385M985 255L990 290L1020 310L1015 350L990 345L980 300M965 300L990 290M1000 270L1025 290L1045 290M855 300L925 300M890 320L940 325L960 340M870 290L895 325L890 360M830 290L835 310L860 350L880 365M800 280L805 320L830 345L815 345L805 380M830 345L860 350L865 390M890 350L925 345L920 380M960 340L1000 345L1047 348M1005 345L1000 395M750 350L745 400M780 350L790 385M720 345L715 400M925 300L965 295M485 275L500 290L492 295M505 290L525 325M500 350L510 380L500 400M565 375L570 390M590 350L590 378M610 345L620 375M275 430L305 430L300 455M470 300L485 290M450 320L445 345M620 290L625 310L615 335M680 310L690 340M700 320L715 345M770 320L775 350M790 320L800 350M840 195L845 225M750 370L745 400M735 365L730 395M880 365L940 360M945 300L950 340M1025 310L1045 300M330 410L340 430M365 440L370 470M355 450L345 470M385 455L400 470M580 350L575 340M640 300L655 320M540 320L545 340M465 350L500 335M450 360L510 345M820 320L835 345M845 310L850 330M905 325L905 350M1010 290L1005 310M615 240L625 260M635 270L640 285M1120 165L1145 185L1150 220M855 15L875 30L905 25M760 265L775 280";

const NE =
  "M0 25L30 60L60 110L105 105L150 95M45 48L70 10M45 48L130 45L140 22L160 35L230 40L285 35L275 10M230 40L212 65L230 100L210 110L215 142L250 142L285 138L290 110L280 40M100 75L120 62L170 65L160 90L145 105L105 100L100 75M150 55L185 70L200 95M212 65L195 80L200 95M310 10L285 35M330 10L350 35L345 75L330 105L290 110M0 150L35 155L30 180L45 210L50 230L0 240M35 155L30 135L60 110M75 140L95 105M75 140L100 165L105 205L45 215M95 150L165 175L135 190L105 205M105 105L165 170L215 142M105 160L130 190M60 115L75 140L90 180L130 270L145 285L150 255L120 205M50 230L65 325L90 320L85 270L70 225M85 270L150 265M90 320L95 350M150 265L155 330L120 335L113 355M155 330L215 330L215 380L183 397M155 330L158 390M150 255L180 265L215 295L215 330M20 240L30 350L65 325M0 265L20 345L30 350M35 240L45 320M10 355L50 350L52 388M15 350L12 380M235 145L265 142L270 185L235 185L230 150M235 185L240 245L260 240L260 290L215 295M285 138L300 200L270 185M300 200L340 200L340 160L330 105M260 240L295 230L325 205L350 200L345 230L350 255L325 285L300 310L260 300M295 230L300 310M215 345L250 345L245 310L300 310L300 345L290 400L275 412L260 410L262 375L250 345M300 345L345 350L350 310L300 315M345 350L350 380L310 395M183 397L230 395L260 400M290 400L350 400M350 380L390 375L395 400L420 400M340 160L380 155L385 200L350 200M380 155L405 175L410 210L385 200M350 100L405 85L410 120L415 175L385 180M350 100L345 140L350 160M350 200L380 230L410 250L400 255L350 255M350 255L350 285L430 290L430 260L360 270M430 230L430 290L505 285L505 230L430 230L430 190L450 165L480 155M350 75L400 40L430 15M370 85L430 30M400 70L410 120L470 115L475 90L440 65L400 75M430 15L445 65M490 10L485 40L520 80L550 40L545 10M480 155L490 110L545 105L545 55M410 120L465 130L480 155M550 40L600 50L610 30L590 10M600 50L595 80M545 105L600 118L680 125L680 75M600 118L600 160L590 200L660 210L665 180L730 120L720 100L680 125M545 120L540 150L490 165L480 190L430 190M545 105L560 120L550 160L540 150M480 190L485 220L525 225L525 180L570 180L575 230L560 240M485 220L440 230M525 225L560 240L585 270L590 300L560 325L510 305L505 285M675 10L680 75L700 85L710 105L735 70M705 10L695 40L705 60L690 75L730 110M720 10L735 45M735 70L730 100M752 68L752 120M680 125L740 120L775 132L803 135L803 113M730 120L735 160L725 185L770 185L775 132M725 185L715 240L665 255L600 290L590 275L600 250L590 200M660 210L715 215M600 250L655 230L665 255M665 180L655 230M770 185L750 240L715 240M803 135L805 190L845 215L870 225L840 240L775 238L790 215L770 185M805 190L840 150L890 125M840 150L850 195L805 190M850 195L885 195L880 150L900 130M900 130L910 190L885 195L875 225L870 225M940 138L940 190L910 190M940 190L1000 160L1000 143M940 190L970 195M875 225L925 222L920 190M925 222L970 220L970 195L1018 180L1050 215L1095 210L1100 265L975 283L970 220M875 225L880 250L875 300L890 335L945 330L975 310L975 283M750 240L755 270L820 275L840 240M755 270L750 300L820 290L820 275M750 300L755 370L720 370L720 305L750 300M700 270L720 245L735 260L735 300L720 305L700 290L700 270M590 300L620 305L650 300L700 290M655 300L655 335L690 345L700 370L695 400L665 415L610 412L605 385L635 340L655 335M600 290L650 285L650 300M620 305L625 335L570 345L545 360L510 345L505 310M560 325L575 340M635 355L645 348L657 362L645 370L635 355M720 370L785 372L775 455L720 455L680 460L690 415L665 415M785 372L825 375L830 345L825 295L820 290M825 295L870 280M830 345L890 335M825 375L850 378L855 420L780 418M855 420L850 465L775 470L775 455M700 370L720 370M785 372L800 300M850 378L885 370L930 360L960 360L970 345L945 340M885 370L892 405L870 435L855 435M945 330L950 320L975 310L985 295L1000 310L1035 308L1055 330L1050 352L1015 355L1010 335L975 320L965 345L945 345M975 325L1000 320L1015 335M1115 335L1125 350L1135 355L1130 340L1115 335M1035 380L1085 380L1085 388L1045 395L1035 380M1085 390L1095 388L1145 390L1140 398L1110 405L1085 390M915 408L935 397L960 405L940 412L915 408M390 290L390 345L430 350L440 315L500 310M390 345L390 370L430 405L460 370L470 330L440 315M350 310L390 310M460 370L510 385L500 340L505 310M430 405L440 420L510 400L520 380L545 355M350 400L360 435L385 430L440 435L450 420M510 385L545 415L540 430L505 420L450 420M520 380L570 385L605 380M545 415L610 412M330 455L385 445L385 430M330 455L322 490L335 515M360 455L400 465L415 460L420 485L400 510L370 510L365 480L360 455M385 430L400 465M440 435L445 545M445 480L480 468L525 475L530 490L520 555L490 565L445 545L395 540L400 510M475 430L480 468M530 490L545 490M540 430L560 540M365 540L400 520L440 520M340 515L340 535L370 545M285 560L300 545L335 538L370 545L400 540L430 560L420 575L380 575L370 545M160 475L190 490L240 495L265 540L285 560L330 595L370 650L415 670L455 650L490 655L540 685L590 700M160 520L190 510L190 490M160 575L225 572L230 545L265 540M285 560L265 590L260 628L160 628L225 625L225 572M158 520L160 780M50 565L55 598L120 600L158 590M65 598L65 635L120 640L120 600M0 582L50 580M0 640L35 645L50 690L0 690M120 640L158 640M110 645L110 680L50 690M50 690L185 685L290 690L310 655L260 628M225 625L230 690M215 690L215 710L185 705L185 685M50 690L55 715L0 715M55 715L85 720L95 750L158 755M0 725L45 730L50 780M158 725L195 725L190 760L158 770M195 725L250 730L245 780M250 730L305 700M300 715L365 715L365 760L300 740L300 715M365 760L440 755L440 710L385 700M385 665L385 755M440 710L440 650M310 655L370 655M330 600L385 590L415 625L420 665M300 580L385 580L385 590M420 575L420 625M520 555L515 600L495 655M520 585L540 610L525 680M520 545L850 545M545 545L545 610L540 610M570 545L565 650L550 690M625 545L615 600L610 650L565 650M665 545L655 635L615 640L615 695M585 650L580 690M700 545L695 660L740 670L775 635L765 600L740 545M440 710L480 710L520 745L515 780M520 745L570 745M480 710L490 660M760 640L800 660L835 600L835 550M740 555L795 600L800 570M850 545L870 565L920 570L950 605L960 600L980 470L1000 475M835 600L865 600L870 565M920 570L910 610L885 655L830 645L825 725M885 655L885 730M855 655L855 725M830 650L790 670L785 740M785 705L805 725M560 540L620 540L625 475L660 460L665 415M715 460L715 545M680 460L680 545M775 470L780 520L775 545M780 505L855 510M850 465L910 460L920 465L910 555L860 550L855 480L910 485M920 465L980 470L975 555M780 535L855 540M1000 475L1005 500L1030 510L1030 530L1000 545L1000 560L1035 575L1095 585L1035 615L1045 640L980 650L950 610M990 545L1050 543L1020 550M1000 560L985 600L1000 620M950 605L950 635L975 645L960 750M985 650L970 750M945 640L920 750M1045 645L1045 690L1020 720L1020 745M1045 670L1070 680M0 75L30 60M0 100L25 105L30 135M15 10L10 40L30 60M690 415L680 460";

const SOUTH =
  "M622 85L660 88L665 65L640 70L665 80L720 85L725 75M665 65L668 50M670 55L680 85L672 100L685 130L620 140M680 85L730 150L685 155L690 135M730 75L730 120L768 118L768 75L830 65L835 80L805 110L768 75M730 150L768 155L768 118M768 90L805 130L805 175L775 175L740 165M838 80L840 155L830 175L805 175M838 90L880 85L905 75L915 50M880 90L885 125L880 150L840 155M885 125L915 150L915 120L905 75M905 70L980 68L985 112L925 115L915 120M945 70L945 115M985 30L985 70L1060 78L1070 115L980 120L980 140L915 150M1070 115L1075 150L1105 180L1155 160M1155 115L1155 160L1200 150L1210 180L1155 190M1155 160L1160 255L1250 250L1250 290L1165 295L1160 255M1200 150L1225 145L1260 195L1250 240M1260 145L1315 150L1315 190L1265 200L1260 145M1380 140L1370 185L1370 265M1320 190L1370 185M1315 200L1285 275M1265 200L1280 270M1305 215L1305 270M1330 190L1330 275M1380 145L1430 150L1440 180L1430 250M1475 145L1445 215L1450 260M1455 215L1495 210M1455 245L1480 240M1160 255L1130 260L1145 345L1100 350M1165 295L1195 300L1385 275L1480 250M1195 300L1195 350L1140 350M1335 285L1340 320L1410 320L1410 270M1340 320L1335 370L1400 370L1440 320M1410 320L1480 318M1385 370L1365 445L1320 440L1330 370M1225 350L1255 365L1255 400L1225 410L1225 350L1160 350L1155 415L1220 410M1255 400L1260 425L1320 440L1435 445L1445 480L1500 490M1365 445L1365 540M1335 445L1330 520M1400 445L1395 510L1370 515M1395 510L1385 560M1205 415L1210 480L1260 470L1255 430M1155 415L1155 500L1145 570M1210 480L1220 560M1145 560L1220 560M1280 480L1280 545M1260 470L1280 485M1155 485L1125 490L1125 455L1040 455L1035 475L1025 520L1125 500M1125 455L1155 440M1025 470L1020 535M1500 490L1455 520L1480 530M545 185L570 180L590 150L600 185L590 212L545 222L545 185M600 185L640 190L625 230L620 265L650 270L680 245L705 260L735 250M640 190L690 185L700 160L635 155L640 190M690 185L695 210L680 245M675 255L670 310L730 305L735 280M700 195L740 170L770 180L785 220L760 255L735 260L700 210M770 180L820 185L835 220L800 225L785 220M820 185L890 190L885 235L835 235M890 190L915 185L920 155M835 220L840 260L885 270L885 235L915 240L910 200L930 200L930 170L980 175L985 205L1020 208L1020 165L980 165M760 255L770 290L800 285L795 240L785 220M810 245L815 290L860 290L855 260M730 285L870 295L945 292L940 240L930 200M945 292L950 330L960 355L980 358L990 320L1010 308L1070 335L1075 290L1060 290L990 290L985 220L1010 225L1020 208L1070 210L1075 285L1045 280L1020 270L1020 208M1065 165L1065 210M1075 165L1080 200L1110 200L1110 170M1080 240L1130 240L1160 255M1075 285L1080 240M870 295L890 325L950 325M835 295L830 325L760 320L760 290M730 305L745 330L810 330L815 360L740 365L730 350L680 355L685 385L740 380M670 310L640 325L610 320L585 345L590 395L615 400L640 385L680 390M640 325L640 345L680 355M445 348L500 335L565 315L575 365L520 375L505 330M445 348L455 375L475 395L480 380L520 375L525 430L570 415L565 390L590 395M415 370L440 385L435 420L415 440M440 385L460 380L465 420L490 430L525 430M470 400L520 395L520 430M495 400L497 430M435 430L460 460L490 440M460 460L425 450M400 450L415 475L450 490L460 460M415 475L395 480M490 430L495 460L480 490L450 490M525 430L530 490L480 490M495 460L528 465M575 415L580 490L530 490L545 495M525 430L580 415L620 430L615 495L580 495M620 400L640 410L670 415L665 435L625 435M640 385L670 415L755 375L755 400L710 415L695 470L680 450L665 435M615 495L695 470L745 475L740 550L680 550L695 520L690 490M655 550L620 545L600 500M755 400L775 415L890 405L910 410L895 440L860 490M805 455L700 470M775 400L885 385L890 405M805 455L820 535L745 550M805 455L860 445L860 490M860 490L870 500L900 490L920 480L915 530L880 540L820 535M910 410L930 430L925 490L935 510L985 510L960 545L905 555M820 330L885 335L890 385L830 385L815 360M845 340L860 375M890 340L910 330L915 405L1020 410L1045 380L1010 308M915 405L950 430L1010 420L1035 440L1035 475L975 465L970 420M1045 380L1100 370L1105 350L1075 335M1100 370L1100 430L1125 455M1105 350L1160 350M185 530L215 540L215 580L225 585L225 610L200 615L195 595M275 515L280 580L285 585L225 585M285 540L290 525L270 520M318 520L318 560L280 570M350 505L350 560M380 495L380 520L430 520L435 560L380 562M355 505L420 490M300 560L350 560L355 600L335 600L300 580M435 560L430 615L395 625L385 560M425 520L450 490M435 545L480 545L480 490M480 545L520 545L525 590L480 585L440 570M520 490L520 545M435 560L460 580L480 660L440 665L430 620M550 495L550 535L520 530M600 495L605 550L555 580L525 575M605 550L620 545L640 620L660 625L680 590L665 550M605 550L620 590L620 620M555 580L600 575L620 600L620 640L530 640L525 590M530 640L530 665L480 675L480 655M620 640L610 700L620 720M575 660L575 700L615 710M530 665L540 730L585 735M205 630L270 625L275 655L210 660L205 630L200 615M275 590L275 625L330 630L345 600M285 585L310 625L310 640L275 655L260 690L305 690L330 665L375 660L365 630L330 630M215 660L215 690L260 700L280 720L275 768M190 685L215 690M260 700L240 730L195 725M240 730L245 768M280 720L305 718L305 768M305 718L325 670L350 660M375 660L380 715L370 768M380 715L420 720L420 768M405 715L405 768M380 660L410 680L410 715M365 630L400 625L410 680L480 710L480 765M345 600L380 625M420 735L480 740M480 730L530 730L530 768M585 710L580 740L585 768M615 660L700 700M625 640L660 625M680 550L680 595L775 580L775 550L820 535L810 590L790 590L775 550M725 590L748 660M830 595L840 540M830 570L865 535L880 540L905 555L900 585L870 590L830 590M850 560L855 590M835 580L850 565L890 570L905 555M960 545L1010 540L1005 570M430 665L440 690L480 700M205 735L210 768M985 510L1025 520M745 510L690 515M570 700L530 700M345 640L330 665M300 600L330 590M290 600L285 640M225 650L240 655M240 670L280 675M360 570L370 600M360 600L345 625M620 370L615 400M780 365L790 385M850 340L885 345M740 395L690 400M585 550L555 535M640 760L615 735L640 745";

/* Splits long segments and nudges the new points so that borders look surveyed, not ruled. */
function rough(d: string, sx: number, sy: number, ox: number, oy: number, amp: number) {
  let seed = 7;
  const rnd = () => {
    seed = (seed * 16807) % 2147483647;
    return seed / 2147483647 - 0.5;
  };
  return d
    .split("M")
    .filter(Boolean)
    .map((part) => {
      const closed = part.includes("Z");
      const pts = part.replace("Z", "").trim().split("L").map((p) => {
        const [x, y] = p.trim().split(" ").map(Number);
        return [ox + x / sx, oy + y / sy];
      });
      if (closed) pts.push(pts[0]);
      let out = "M" + pts[0].map((v) => v.toFixed(1)).join(" ");
      for (let i = 1; i < pts.length; i++) {
        const [ax, ay] = pts[i - 1];
        const [bx, by] = pts[i];
        const n = Math.max(1, Math.round(Math.hypot(bx - ax, by - ay) / 4));
        for (let k = 1; k <= n; k++) {
          const j = k < n ? amp : 0;
          out += `L${(ax + ((bx - ax) * k) / n + rnd() * j).toFixed(1)} ${(ay + ((by - ay) * k) / n + rnd() * j).toFixed(1)}`;
        }
      }
      return out + (closed ? "Z" : "");
    })
    .join("");
}
const coast = rough(OUTLINE, 1, 1, 0, 0, 1.1);

function MapView() {
  return (
    <svg width="869" height="443" viewBox="199 243 869 443" className="block">
      <clipPath id="land"><path d={coast} /></clipPath>
      <clipPath id="low"><path d="M199 425H630V497H870V690H199Z" /></clipPath>
      <clipPath id="east"><path d="M630 240H1070V500H858V497H630Z" /></clipPath>
      <path d={coast} fill="#e8718d" />
      <g clipPath="url(#land)" fill="none" stroke="#2b2226" strokeWidth="1">
        <path d={rough(NW, 3, 3, 198, 240, 1.1)} />
        <path d={rough(NE, 3, 3, 630, 240, 1.1)} clipPath="url(#east)" />
        <path d={rough(SOUTH, 2.376, 3, 198, 430, 1.1)} clipPath="url(#low)" />
      </g>
      <path d={coast} fill="none" stroke="#2b2226" strokeWidth="0.9" />
      <g fill="none" stroke="#ff0000" strokeWidth="4">
        <path d="M829 269L842 267L855 265" />
        <path d="M451 322l3 2 2 3 1 6" />
        <path d="M484 627l2 12 3 12 4 12" />
        <path d="M596 491h4M600 494l5 4 3 4-5 1-1 5-4 2-6 1" strokeWidth="3.500" />
        <path d="M1023 315l4 4 3 7 6 1 6 1 2-4 6-1-1-4-5-2-6 1-4 0-5-1-5-1" />
        <path d="M744 407h6M746 413.500h7M459 637h6M544 626h4" />
      </g>
      <circle cx="805.500" cy="578.500" r="3.600" fill="#ff0000" />
    </svg>
  );
}

/* ---------- small widgets ---------- */
const PanelBtns = () => (
  <span className="ml-auto flex gap-[3px]">
    <svg width="11" height="11"><rect x=".5" y=".5" width="10" height="10" rx="2" fill="#eee" stroke="#666" /><path d="M4.500 2.500h4v4h-4zM2.500 4.500h4v4h-4z" fill="#eee" stroke="#555" /></svg>
    <svg width="11" height="11"><rect x=".5" y=".5" width="10" height="10" rx="2" fill="#eee" stroke="#666" /><path d="M3 3l5 5M8 3l-5 5" stroke="#444" strokeWidth="2" /></svg>
  </span>
);
const Arrow = ({ r }: { r: "u" | "d" | "l" | "r" }) => (
  <svg width="8" height="8" className={{ u: "", d: "rotate-180", l: "-rotate-90", r: "rotate-90" }[r]}><path d="M0 6L4 2L8 6Z" fill="#555" /></svg>
);
const Spin = () => (
  <span className="flex h-full w-[13px] flex-col items-center justify-center gap-0.5 border-l border-[#c2c2c2]"><Arrow r="u" /><Arrow r="d" /></span>
);
const Check = ({ on = true }: { on?: boolean }) => (
  <span className="flex h-[14px] w-[14px] shrink-0 items-center justify-center border border-[#b4b4b4] bg-white">
    {on && <svg width="10" height="10"><path d="M1.500 5L4 8.500 8.500 1" fill="none" stroke="#111" strokeWidth="1.800" /></svg>}
  </span>
);
const box = "flex shrink-0 items-center rounded-[3px] border border-[#aeaeae] bg-white";

const TREE: [string, string, number, boolean][] = [
  ["star", "Favorites", 61, false], ["bms", "Spatial Bookmarks", 126, true], ["home", "Home", 40, true], ["folder", "/", 6, true],
  ["newgpkg", "GeoPackage", 83, false], ["feather", "SpatiaLite", 68, false], ["elephant", "PostGIS", 53, false], ["mssql", "MSSQL", 47, false],
];

const DOCK: [string, React.ReactNode, number][] = [
  ["files", <g><rect x="1" y="1" width="26" height="27" rx="2.500" fill="#a39c8b" /><rect x="2" y="1" width="24" height="24" rx="2" fill="#b9b2a2" /><path d="M5 8a2 2 0 0 1 2-2h5l2 2h7a2 2 0 0 1 2 2v11a2 2 0 0 1-2 2H7a2 2 0 0 1-2-2z" fill="#fbfaf7" /></g>, 1],
  ["firefox", <g><circle cx="14" cy="16" r="12.500" fill="#ff5a36" /><path d="M16 0c2 5 10 7 10.500 15S21 28 14 28.500c6-2 9-8 6-13s-7-9-4-15.500z" fill="#ffce33" /><path d="M2 7l3 4c0 10 6 15 14 15-3 3-8 3-12 1S0 16 2 7z" fill="#f0308a" opacity=".8" /><circle cx="14" cy="16.500" r="5.800" fill="#7a4fd9" /><path d="M4 5l3 4c3-1 5 0 7 2.500l-4 1.500c-2 1-2 3-2 4-3-3-5-7-4-12z" fill="#ff9a28" /></g>, 1],
  ["code", <g><path d="M20 0l7 3v22l-7 3-2-1V1z" fill="#23a8f2" /><path d="M20 0v8L5 20l-3-2.500z" fill="#0a7fd0" /><path d="M20 28v-8L5 8 2 10.500z" fill="#1492e0" /></g>, 2],
  ["term", <g><rect x="1.500" y="3" width="25" height="24" rx="2.500" fill="#3c3c3c" stroke="#777" strokeWidth=".8" /><path d="M5 7l3 2-3 2M9 12h4" fill="none" stroke="#ddd" strokeWidth="1.200" /></g>, 0],
  ["store", <g><path d="M9 5c0-6 10-6 10 0" fill="none" stroke="#d9cbbb" strokeWidth="1.800" /><rect x="1" y="3" width="26" height="25" rx="2.500" fill="#ee5a22" /><path d="M14 8L8.500 23M14 8l5.500 15M7 18h14" stroke="#fff" strokeWidth="2.700" fill="none" /></g>, 0],
  ["todo", <g><rect x="3" y="2" width="22" height="26" rx="3" fill="#6a93f3" /><path d="M3 11h22v8H3z" fill="#5480ee" /><path d="M6 7l2 2 4-4M6 23l2 2 4-4M15 7h7M15 23h7" fill="none" stroke="#4467bd" strokeWidth="1.500" /><path d="M6 15l2 2 4-4M15 15h7" fill="none" stroke="#fff" strokeWidth="1.600" /></g>, 0],
  ["qgis", <g><circle cx="14" cy="15" r="10.500" fill="none" stroke="#8bb42c" strokeWidth="6" /><path d="M13 13l12.500 13" stroke="#d8e8a0" strokeWidth="6" /><path d="M16 16l10 10.500" stroke="#77a82a" strokeWidth="4.500" /><path d="M12 12l5 5" stroke="#f08c28" strokeWidth="5" /></g>, 1],
  ["teamviewer", <g><rect x="-1" y="0" width="30" height="30" fill="#0f74c8" /><circle cx="14" cy="15" r="12.500" fill="#fff" /><path d="M4 15l6-5v3h8v-3l6 5-6 5v-3h-8v3z" fill="#0f74c8" /></g>, 0],
  ["pg", <g fill="none" stroke="#336c99" strokeWidth="1.200"><path d="M5 2c4-1 7 0 9 1 3-2 9-2 12 2 2 5-3 13-6 13l5 1c-2 2-5 1-6 1l-1 8c-1 2-5 2-5 0v-9c-2 2-5 3-7 0C1 14 0 4 5 2z" /><path d="M10 3c-2 4-1 10 0 14M18 3c4 5 2 9 1 14M13 8c-1 4 0 8 0 11" /></g>, 0],
  ["zoom", <g><rect x="-1" y="0" width="30" height="30" rx="8" fill="#4a90fa" /><rect x="5" y="10" width="12" height="10" rx="2" fill="#fff" /><path d="M18 14l5-4v10l-5-4z" fill="#fff" /></g>, 2],
  ["reader", <g><rect x="3" y="2" width="23" height="27" rx="2.500" fill="#ececec" /><path d="M6 6h16M6 9h16M6 12h7M6 15h7" stroke="#888" strokeWidth="1.300" /><rect x="15" y="11" width="9" height="8" fill="#e33b3b" /><path d="M17 16l4-3 1 3" stroke="#fff" fill="none" /><path d="M4 22h20" stroke="#1d4d8f" strokeWidth="1.500" /><path d="M5 22c0 6 8 6 8 0M15 22c0 6 8 6 8 0" fill="#bcd" stroke="#1d4d8f" strokeWidth="1.500" /></g>, 1],
];

export default function App() {
  return (
    <div className="flex h-[768px] w-[1366px] flex-col overflow-hidden border-[3px] border-[#639a1a] bg-[#efefef] font-['Noto_Sans',sans-serif] text-[14px] leading-[19px] text-black">
      {/* desktop bar */}
      <div className="flex h-6 shrink-0 items-center bg-[#1c1c1c] pb-1 text-[#dedede]">
        <Fit w={63} className="ml-[9px]">Activities</Fit>
        <svg width="16" height="16" viewBox="0 0 16 16" className="ml-[34px]"><circle cx="8" cy="7.500" r="6" fill="none" stroke="#888" strokeWidth="2.800" /><path d="M7 6l8.500 9" stroke="#aaa" strokeWidth="3.500" /></svg>
        <Fit w={93} className="ml-[6px]">QGIS Desktop</Fit>
        <span className="ml-[5px]"><Tri c="#eee" w={10} /></span>
        <Fit w={89} className="ml-[400px] -translate-y-px">Aug 14  18:18</Fit>
        <span className="ml-auto flex items-center gap-[13px] pr-[12px]">
          <svg width="16" height="16" className="mr-[22px]"><rect width="16" height="16" rx="5" fill="#4a8cf7" /><rect x="3" y="5.500" width="7" height="5.500" rx="1" fill="#fff" /><path d="M10.500 7.500L13 6v5l-2.500-1.500z" fill="#fff" /></svg>
          <svg width="16" height="15"><path d="M8 5v4M3 11V8h10v3" fill="none" stroke="#eee" strokeWidth="1.300" /><path d="M5.500 1h5v4h-5zM.5 10.500h5v4h-5zM10.500 10.500h5v4h-5z" fill="#eee" /></svg>
          <svg width="15" height="14"><path d="M0 4.500h3l4-4v13l-4-4H0z" fill="#eee" /><path d="M9 4q2 3 0 6M11 2.500q3.500 4.500 0 9" fill="none" stroke="#bbb" strokeWidth="1.300" /></svg>
          <svg width="10" height="16"><rect x="2.700" y=".7" width="4.600" height="9" rx="2.300" fill="#666" stroke="#eee" strokeWidth="1.200" /><path d="M.7 6v2a4.300 4 0 0 0 8.600 0V6M5 12v3M2.500 15.300h5" fill="none" stroke="#eee" strokeWidth="1.300" /></svg>
          <svg width="15" height="16"><path d="M3.500 4L1 8.500h2L2 13l3-6H3z" fill="#888" /><rect x="7" y="2.500" width="7" height="12.500" rx="1" fill="none" stroke="#eee" strokeWidth="1.200" /><path d="M9 0h3v2H9zM8.700 4.500h3.600v9H8.700z" fill="#eee" /></svg>
          <Tri c="#eee" w={10} />
        </span>
      </div>

      {/* window title */}
      <div className="relative flex h-[37px] shrink-0 items-center justify-end border-b border-[#222] bg-[#322f30]">
        <Fit w={163} className="absolute top-[9px] left-[602px] text-[14px] font-bold text-white">Untitled Project - QGIS</Fit>
        <div className="absolute top-0 left-[494px] flex h-[22px] w-[370px] items-center overflow-hidden rounded-b-[3px] bg-[#4cc700] [font-family:'DejaVu_Sans',sans-serif] text-[11.5px]">
          <svg width="10" height="10" className="ml-4"><path d="M9.500 0C5 0 3 2 3 5H.5L4 10l4-5H6c0-2 1-4 3.500-5z" fill="#1e6b05" /></svg>
          <svg width="11" height="12" className="ml-[26px]"><path d="M5.500 0L11 2v4c0 3-3 5-5.500 6C3 11 0 9 0 6V2z" fill="#1e6b05" /><path d="M3 6l2 2 3.500-4" fill="none" stroke="#5cd014" strokeWidth="1.200" /></svg>
          <Fit w={103} className="ml-[37px] text-[#10380a]">ID: 775 0793 1375</Fit>
          <svg width="13" height="10" className="ml-[26px]"><path d="M0 2.500h3l5-2.500v10L3 7.500H0z" fill="#1b2c2c" /><path d="M9.500 2v6M11.500 1v8" stroke="#31701c" /></svg>
          <div className="ml-auto flex h-full w-[116px] items-center bg-[#fb4141] pl-5 text-white">
            <Fit w={61}>Stop Share</Fit>
            <span className="ml-[6px] h-2 w-2 rounded-[1px] bg-white" />
          </div>
        </div>
        <span className="mt-1 mr-[26px] h-px w-2 bg-white" />
        <svg width="9" height="9" className="mr-[20px]"><path d="M1 3h5v5H1zM3 .700h5v5" fill="none" stroke="#ddd" strokeWidth="1.300" /></svg>
        <svg width="19" height="19" className="mr-[5px]"><circle cx="9.500" cy="9.500" r="9" fill="#e95420" /><path d="M6 6l7 7M13 6l-7 7" stroke="#fff" strokeWidth="1.600" /></svg>
      </div>

      {/* menu */}
      <div className="flex h-[22px] shrink-0 items-center border-b border-[#cdcdcd] bg-[#efefef] pl-[7px]">
        {MENUS.map(([t, u, w, g]) => (
          <span key={t} className="flex">
            <Fit w={w}>
              {u < 0 ? t : <>{t.slice(0, u)}<span className="underline underline-offset-2">{t[u]}</span>{t.slice(u + 1)}</>}
            </Fit>
            <svg width={g} height="1" />
          </span>
        ))}
      </div>

      <div className={bar + "h-[39px]"}>
        <Grip className="w-[9.5px]" />
        <Tools items={"newdoc open save layout report style | *hand pansel zin zout zfull zsel zlay znat zprev znext newmap newbm bms refresh | info act V select v selval v desel table abacus gear sigma ruler v maptip textann v".split(" ")} />
      </div>
      <div className={bar + "h-[39px]"}>
        <Grip className="w-[9.5px]" />
        <Tools items={"addlayer gpkg shp feathern chip / virt | edits. edit saved addpoly vertex V attr trash cut copy paste undo redo : abcY chart / abB abcR / abP abE abM abR abC | hex binoc | python | help | *topo".split(" ")} />
      </div>
      <div className={bar + "relative h-[39px]"}>
        <Grip className="w-[9.5px]" />
        <Tools items={["*magnet", "snapv.", "snapp."]} />
        <span className={box + " h-6 w-[104px] pl-1"}><Fit w={16}>20</Fit><span className="ml-auto h-full"><Spin /></span></span>
        <span className="mr-[2px] ml-px flex h-6 w-[111px] items-center rounded-[3px] border border-[#aeaeae] bg-linear-to-b from-white to-[#efefef] pr-[6px] pl-1"><Fit w={16}>px</Fit><span className="ml-auto"><Tri /></span></span>
        <Tools items={["topoedit", "inter", "trace"]} />
        <span className="-ml-0.5"><Tri /></span>
        <div className="absolute top-[13px] left-[1139px] z-10 flex h-[30px] w-[212px] items-center bg-[#28313b] pl-[5px] text-[13px] text-[#d5d8da]">
          <Fit w={51} className="-translate-y-px">Talking:</Fit>
        </div>
      </div>
      <div className={bar + "h-[38px]"}>
        <Grip className="w-[9.5px]" />
        <Tools items={["maptiler", "osm", "|", "clock", "|", "rectsel", "|"]} />
        <span className={box + " mr-px h-[25px] w-[142px] pl-[3px] text-[#8a8a8a]"}><Fit w={134}>MapTiler Geocodi…</Fit></span>
        <Tools items={"| globe globeR globeL | docs pinmap zpoint zpoints globeG xy extent".split(" ")} />
      </div>

      {/* work area */}
      <div className="flex h-[446px] shrink-0">
        <div className="flex w-[195px] shrink-0 flex-col pr-[7px]">
          <div className="flex h-[22px] shrink-0 items-center pr-px pl-px"><Fit w={56} className="-translate-y-px">Browser</Fit><PanelBtns /></div>
          <div className="mb-[3px] flex h-[26px] shrink-0 items-center gap-[9px] pl-[5px]">
            <Ic n="addsq" s={16} /><Ic n="refresh" s={16} /><Ic n="filter" s={16} /><Ic n="collapse" s={16} /><Ic n="infoonly" s={15} />
          </div>
          <div className="flex h-[157px] shrink-0 flex-col border border-l-0 border-[#b0b0b0] bg-white">
            <div className="flex h-[141px] shrink-0 overflow-hidden">
              <div className="w-[174px] overflow-hidden">
                {TREE.map(([ic, t, w, ar]) => (
                  <div key={t} className="flex h-[19px] items-center">
                    <span className="flex w-[21px] pl-[4px]">{ar && <Arrow r="r" />}</span>
                    <Ic n={ic} s={16} />
                    <Fit w={w} className="ml-[6px]">{t}</Fit>
                  </div>
                ))}
              </div>
              <div className="flex w-[14px] flex-col border-l border-[#b0b0b0] bg-[#dfdfdf]">
                <span className="flex h-[14px] items-center justify-center border-b border-[#b8b8b8] bg-[#f4f4f4]"><Arrow r="u" /></span>
                <span className="h-[44px] border-b border-[#b0b0b0] bg-[#fbfbfb]" />
                <span className="mt-auto flex h-[14px] items-center justify-center border-t border-[#b8b8b8] bg-[#f4f4f4]"><Arrow r="d" /></span>
              </div>
            </div>
            <div className="flex h-[14px] border-t border-[#b0b0b0] bg-[#dfdfdf]">
              <span className="flex w-[12px] items-center justify-center border-r border-[#b8b8b8] bg-[#f4f4f4]"><Arrow r="l" /></span>
              <span className="w-[139px] border-r border-[#b0b0b0] bg-[#fbfbfb]" />
              <span className="ml-[9px] flex w-[14px] items-center justify-center bg-[#f4f4f4]"><Arrow r="r" /></span>
              <span className="flex-1 border-l border-[#b8b8b8] bg-[#efefef]" />
            </div>
          </div>
          <div className="flex h-[6px] shrink-0 items-center justify-center"><span className="w-4 border-t border-dotted border-[#aaa]" /></div>
          <div className="flex h-[20px] shrink-0 items-center pr-px pl-px"><Fit w={43} className="-translate-y-px">Layers</Fit><PanelBtns /></div>
          <div className="mb-[2px] flex h-[28px] shrink-0 items-center pl-[5px]">
            <Ic n="brush" s={16} /><span className="w-[9px]" /><Ic n="group" s={16} /><span className="w-[9px]" />
            <span className="relative flex"><Ic n="eye" s={16} /><span className="absolute -right-1 -bottom-1 flex"><Tri w={5} /></span></span>
            <span className="w-[9px]" /><Ic n="filter" s={16} /><span className="w-[10px]" /><Ic n="eps" s={16} /><span className="w-[5px]" /><Tri /><span className="w-[8px]" /><Ic n="expand" s={16} />
            <span className="ml-auto pr-[3px] pb-0.5 text-[16px] text-[#333]">»</span>
          </div>
          <div className="flex-1 border border-l-0 border-[#b0b0b0] bg-white">
            {([["changed", 60, "#b07ba5", true], ["layer1", 44, "#b94a4d", false], ["layer2", 45, "#b94a4d", false]] as [string, number, string, boolean][]).map(([t, w, c, on]) => (
              <div key={t} className={"flex h-[19px] items-center pl-[21px] " + (on ? "bg-[#308cc6] text-white" : "text-[#848484]")}>
                <Check on={on} />
                <svg width="16" height="16" className="ml-[6px]"><rect x=".5" y=".5" width="15" height="15" fill={c} stroke="#6a4c5c" />{t === "layer1" && <path d="M4 14l1-5 5-7 2.500 1-4.500 8z" fill="#f0a03c" stroke="#eee" strokeWidth=".7" />}</svg>
                <Fit w={w} className={"ml-[6px] font-bold " + (on ? "" : "italic")}><span className={on ? "underline underline-offset-2" : ""}>{t}</span></Fit>
                <span className={"mr-px ml-auto h-[15px] w-1 " + (on ? "bg-white" : "bg-[#ededed]")} />
              </div>
            ))}
          </div>
        </div>
        <div className="mt-px h-[445px] w-[871px] shrink-0 border border-[#b0b0b0] bg-white"><MapView /></div>

        <div className="flex flex-1 flex-col overflow-hidden pl-[6px]">
          <div className="flex h-[22px] shrink-0 items-center pl-1"><Fit w={162} className="-translate-y-px">Topology Checker Panel</Fit><span className="-mr-0.5 ml-auto flex"><PanelBtns /></span></div>
          <div className="mb-[3px] flex h-[26px] shrink-0 items-center gap-[10px] pl-[8px]"><Ic n="check" s={15} /><Ic n="checkbox" s={15} /><Ic n="wrench" s={14} /></div>
          <div className="mt-[6px] flex h-[360px] shrink-0 flex-col border border-r-0 border-[#b0b0b0] bg-white">
            <div className="flex h-[344px] shrink-0">
              <div className="w-[276px] shrink-0 overflow-hidden">
                <div className="flex h-[21px] items-center overflow-hidden border-b border-[#a8a8a8] bg-linear-to-b from-white to-[#ececec]">
                  <span className="flex h-full w-[192px] shrink-0 items-center border-r border-[#bdbdbd] pl-[90px]"><Fit w={34}>Error</Fit></span>
                  <span className="flex h-full w-[65px] shrink-0 items-center justify-center border-r border-[#bdbdbd]"><Fit w={36}>Layer</Fit></span>
                  <span className="pl-[14px]">F</span>
                </div>
                {Array.from({ length: 16 }, (_, i) => (
                  <div key={i} className="flex h-[21px]">
                    <span className="flex w-[22px] shrink-0 items-center border-r border-b border-[#a8a8a8] bg-linear-to-b from-[#fafafa] to-[#ebebeb] pt-[2px] pl-[2px]"><Fit w={i > 9 ? 16 : 8}>{i}</Fit></span>
                    <span className="w-[170px] shrink-0 border-r border-b border-[#bdbdbd] pl-[3px] leading-[17px]"><Fit w={163}>intersecting geometries</Fit></span>
                    <span className="w-[65px] shrink-0 border-r border-b border-[#bdbdbd] pl-[3px] leading-[17px]"><Fit w={58}>changed</Fit></span>
                    <span className="flex-1 border-b border-[#bdbdbd]" />
                  </div>
                ))}
              </div>
              <div className="flex flex-1 flex-col border-l border-[#b0b0b0] bg-[#dcdcdc]">
                <span className="flex h-[14px] items-center justify-center border-b border-[#b8b8b8] bg-[#f0f0f0]"><Arrow r="u" /></span>
                <span className="h-[80px] border-b border-[#b0b0b0] bg-[#f3f3f3]" />
                <span className="mt-auto flex h-[14px] items-center justify-center border-t border-[#b8b8b8] bg-[#f0f0f0]"><Arrow r="d" /></span>
              </div>
            </div>
            <div className="flex h-[14px] border-t border-[#b0b0b0] bg-[#dfdfdf]">
              <span className="flex w-[14px] items-center justify-center border-r border-[#b8b8b8] bg-[#f4f4f4]"><Arrow r="l" /></span>
              <span className="w-[165px] border-r border-[#b0b0b0] bg-[#fbfbfb]" />
              <span className="ml-[83px] flex w-[14px] items-center justify-center border-l border-[#b8b8b8] bg-[#f4f4f4]"><Arrow r="r" /></span>
              <span className="flex-1 border-l border-[#b8b8b8] bg-[#efefef]" />
            </div>
          </div>
          <div className="flex flex-1 items-center pt-[7px]"><Check /><Fit w={82} className="ml-[5px]">Show errors</Fit><Fit w={141} className="ml-[46px]">60 errors were found</Fit></div>
        </div>
      </div>

      {/* status bar */}
      <div className="flex h-[31px] shrink-0 items-center pl-px text-[12px]">
        <span className={box + " ml-px h-[25px] w-[272px] pl-[7px] text-[14px] text-[#8b8b8b]"}>
          <svg width="12" height="13"><circle cx="5" cy="5" r="4" fill="none" stroke="#888" strokeWidth="1.200" /><path d="M8 8l3.500 4" stroke="#888" strokeWidth="1.300" /></svg>
          <Fit w={152} className="ml-[8px]">Type to locate (Ctrl+K)</Fit>
        </span>
        <Fit w={61} className="ml-[207px]">Coordinate</Fit>
        <span className={box + " ml-[3px] h-[23px] w-[106px] justify-center"}><Fit w={76}>74.370,21.423</Fit></span>
        <svg width="15" height="16" viewBox="0 0 15 16" className="ml-[4px]"><path d="M2 3l9 9M5 1l8 8M8 2l5 5" stroke="#222" strokeWidth="1.500" /><circle cx="9.500" cy="10.500" r="4" fill="#fff" stroke="#333" /><path d="M3 10c1 4 4 5 7 5M1 7l3 5" fill="none" stroke="#333" /></svg>
        <Fit w={28} className="ml-[14px]">Scale</Fit>
        <span className={box + " ml-[4px] h-[23px] w-[97px] pl-1"}><Fit w={50}>1:389478</Fit><span className="ml-auto flex h-full w-[20px] items-center justify-center border-l border-[#c2c2c2]"><Tri /></span></span>
        <svg width="12" height="14" className="ml-[12px]"><path d="M3 7V4a3 3 0 0 1 6 0v3" fill="none" stroke="#666" strokeWidth="1.500" /><rect x=".5" y="6" width="11" height="8" rx="1" fill="#777" /></svg>
        <Fit w={52} className="ml-[9px]">Magnifier</Fit>
        <span className={box + " ml-[4px] h-[23px] w-[97px] pl-1"}><Fit w={31}>100%</Fit><span className="ml-auto h-full"><Spin /></span></span>
        <Fit w={47} className="ml-[10px]">Rotation</Fit>
        <span className={box + " ml-[10px] h-[23px] w-[94px] pl-[4px]"}><Fit w={25}>0.0 °</Fit><span className="ml-auto h-full"><Spin /></span></span>
        <span className="ml-[6px] flex"><Check /></span>
        <Fit w={39} className="ml-[5px]">Render</Fit>
        <span className="ml-[16px] flex"><Ic n="globeG" s={14} /></span>
        <Fit w={58} className="ml-[4px]">EPSG:4326</Fit>
        <svg width="16" height="14" className="ml-[24px]"><ellipse cx="8" cy="6.500" rx="7.500" ry="6" fill="#555" /><path d="M9 11l5 3-1-5z" fill="#555" /><path d="M3.500 6.500h2M7 6.500h2M10.500 6.500h2" stroke="#ddd" strokeWidth="1.600" /></svg>
      </div>

      {/* dock */}
      <div className="relative flex flex-1 items-center overflow-hidden bg-[#202022] pl-[1px]">
        <svg width="1360" height="48" className="absolute top-0 left-0">
          <path d="M0 0H120L60 48H0Z" fill="#232325" /><path d="M140 48L200 0H225L180 48Z" fill="#29292b" /><path d="M240 0H1060L1110 48H240Z" fill="#252527" />
          <path d="M240 14H1090M300 31H1100" stroke="#1c1c1d" strokeWidth="1.500" /><path d="M1110 0L1190 48H1150L1070 0Z" fill="#2e2e30" /><path d="M1190 0H1230L1290 48H1240Z" fill="#1a1a1c" /><path d="M1300 0H1360V48H1320Z" fill="#1d1d1f" />
        </svg>
        {DOCK.map(([k, g, dots]) => (
          <span key={k} className="relative flex h-full w-[54px] items-center justify-center first-of-type:-ml-[4px]">
            <span className={k === "qgis" ? "flex h-full w-[46px] items-center justify-center rounded-t-[3px] bg-[#454547]" : "flex"}>
              <svg width="28" height="30" viewBox="0 0 28 30" className="translate-y-px overflow-visible">{g}</svg>
            </span>
            <span className="absolute -bottom-px left-0 flex w-[46px] translate-x-[4px] justify-center gap-[2px]">
              {Array.from({ length: dots }, (_, i) => <span key={i} className="h-[4px] w-[4px] rounded-full bg-[#e95420]" />)}
            </span>
          </span>
        ))}
        <svg width="20" height="20" className="relative mr-[14px] ml-auto translate-y-px">
          {[0, 1, 2].map((y) => [0, 1, 2].map((x) => <rect key={`${x}${y}`} x={x * 7.700} y={y * 7.700} width="4" height="4" rx="1" fill="#f2f2f2" />))}
        </svg>
      </div>
    </div>
  );
}
